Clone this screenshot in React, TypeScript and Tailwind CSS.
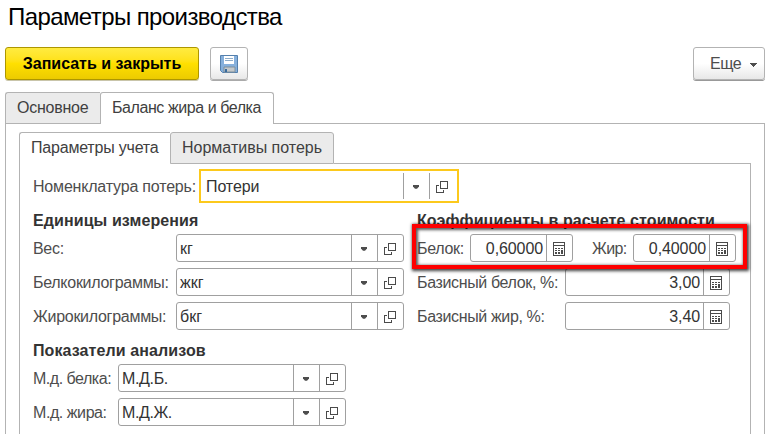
import type { ReactNode } from "react";

function Caret() {
  return (
    <svg width="7" height="4" viewBox="0 0 7 4" shapeRendering="crispEdges" className="shrink-0">
      <path d="M0 0h7v1h-1v1h-1v1h-1v1h-1v-1h-1v-1h-1v-1h-1z" fill="#4d4d4d" />
    </svg>
  );
}

function SmallCaret() {
  return (
    <svg width="6" height="4" viewBox="0 0 6 4" className="shrink-0">
      <path d="M0 0h6v1.500L4 3.700H2L0 1.500z" fill="#4d4d4d" />
    </svg>
  );
}

function OpenIcon() {
  return (
    <svg width="12" height="12" viewBox="0 0 12 12" shapeRendering="crispEdges" fill="none" stroke="#4a4a4a">
      <path d="M4.5 .5h7v7h-7zM3 4.5h-2.5v7h7v-2.500" />
    </svg>
  );
}

function CalcIcon() {
  return (
    <svg width="12" height="14" viewBox="0 0 12 14" shapeRendering="crispEdges">
      <rect x=".5" y=".5" width="11" height="13" fill="#fff" stroke="#4a4a4a" />
      <path
        d="M1 3h10v1H1zM2 6h2v1H2zM5 6h2v1H5zM8 6h2v1H8zM2 8h2v1H2zM5 8h2v1H5zM8 8h2v4H8zM2 10h2v2H2zM5 10h2v2H5z"
        fill="#4a4a4a"
      />
    </svg>
  );
}

function FloppyIcon() {
  return (
    <svg width="18" height="18" viewBox="0 0 18 18">
      <path d="M.5.5h17v17h-15l-2-2z" fill="#86b0dc" stroke="#5480ad" />
      <path d="M4 1h10v8H4z" fill="#fff" />
      <path d="M5 3.5h8M5 5.5h8" stroke="#8fadc9" />
      <path d="M4 12h11v5H4z" fill="#c4c8ca" stroke="#7f909d" />
      <path d="M5 14h2v3H5z" fill="#386b9d" />
    </svg>
  );
}

function SelectField({ value, className }: { value: string; className: string }) {
  return (
    <div className={"flex h-7 shrink-0 rounded-[3px] border border-[#a0a0a0] bg-white text-[#333] " + className}>
      <span className="flex-1 pl-[3px] leading-[27px]">{value}</span>
      <span className="flex w-[26px] items-center border-l border-[#a0a0a0] pl-[9px] pt-0.5">
        <SmallCaret />
      </span>
      <span className="flex w-[26px] items-center border-l border-[#a0a0a0] pl-1.5 pt-0.5">
        <OpenIcon />
      </span>
    </div>
  );
}

function NumberField({ value, className }: { value: string; className: string }) {
  return (
    <div className={"flex h-7 shrink-0 rounded-[3px] border border-[#a0a0a0] bg-white text-[#333] " + className}>
      <span className="flex-1 pr-[3px] text-right leading-[27px] tracking-[-0.1px]">{value}</span>
      <span className="flex w-[26px] items-center border-l border-[#a0a0a0] pl-1.5 pt-0.5">
        <CalcIcon />
      </span>
    </div>
  );
}

function Label({ children, className = "" }: { children: ReactNode; className?: string }) {
  return <span className={"h-7 shrink-0 leading-[29px] " + className}>{children}</span>;
}

export default function App() {
  return (
    <div className="h-[434px] w-[778px] overflow-hidden whitespace-nowrap bg-white font-['Liberation_Sans',Arial,sans-serif] text-base text-[#4d4d4d]">
      <h1 className="h-[47px] pl-2 pt-[2px] text-2xl leading-[30px] text-black">
        <span className="tracking-[-0.59px]">Параметры производства</span>
      </h1>
      <div className="flex h-[45px] pl-[5px]">
        <button className="h-[33px] w-[194px] rounded-[3px] border border-[#ad9600] bg-linear-to-b from-[#ffeb3f] via-[#ffe000] to-[#eccb00] font-bold text-black shadow-[0_1px_0_#c9c5aa]">
          Записать и закрыть
        </button>
        <button className="ml-[11px] flex h-[33px] w-[38px] items-center justify-center rounded-[3px] border border-[#b3b3b3] bg-linear-to-b from-white from-50% to-[#e8e8e8] pt-px shadow-[0_1px_0_#aaa]">
          <FloppyIcon />
        </button>
        <button className="ml-[445px] flex h-[33px] w-[72px] items-center rounded-[3px] border border-[#b3b3b3] bg-linear-to-b from-white from-50% to-[#e8e8e8] pl-4 shadow-[0_1px_0_#999]">
          <span className="w-10 text-left tracking-[-0.4px]">Еще</span>
          <span className="flex pt-[3px]">
            <Caret />
          </span>
        </button>
      </div>

      <div className="flex h-8 pl-[5px] leading-[29px] text-[#404040]">
        <div className="w-[95px] rounded-tl-[3px] border border-r-0 border-[#b3b3b3] bg-[#ebebeb] pl-[11px] tracking-[-0.25px]">
          Основное
        </div>
        <div className="w-[174px] rounded-t-[3px] border border-b-0 border-[#b3b3b3] pl-[11px] tracking-[-0.43px]">
          Баланс жира и белка
        </div>
        <div className="w-[491px] border-b border-[#b3b3b3]" />
      </div>

      <div className="ml-[5px] h-[310px] w-[760px] border-x border-[#b3b3b3] pl-[13px] pt-2">
        <div className="flex h-8 leading-[29px] text-[#404040]">
          <div className="w-[151px] rounded-tl-[3px] border border-b-0 border-r-0 border-[#b3b3b3] pl-[11px] tracking-[-0.2px]">
            Параметры учета
          </div>
          <div className="w-[164px] rounded-t-[3px] border border-[#b3b3b3] bg-[#ebebeb] pl-[11px]">
            Нормативы потерь
          </div>
          <div className="w-[417px] border-b border-[#b3b3b3]" />
        </div>
        <div className="h-[270px] w-[732px] border-x border-[#b3b3b3] pl-[13px] pt-[5px]">
          <div className="flex h-[34px] items-center">
            <Label className="w-[166px] tracking-[-0.19px]">Номенклатура потерь:</Label>
            <div className="flex h-[34px] w-[260px] items-center border-2 border-[#fcc91c] text-[#333]">
              <span className="flex-1 pl-[5px] pt-px tracking-[-0.1px]">Потери</span>
              <span className="flex h-[26px] w-[26px] items-center border-l border-[#a0a0a0] pl-[9px] pt-0.5">
                <SmallCaret />
              </span>
              <span className="flex h-[26px] w-[28px] items-center border-l border-[#a0a0a0] pl-1.5 pt-0.5">
                <OpenIcon />
              </span>
            </div>
          </div>

          <div className="flex pt-[7px]">
            <div className="w-[384px]">
              <h2 className="h-6 font-bold leading-[22px] tracking-[0.1px] text-[#333]">Единицы измерения</h2>
              <div className="flex flex-col gap-1.5">
                <div className="flex">
                  <Label className="w-[143px] tracking-[-0.3px]">Вес:</Label>
                  <SelectField value="кг" className="w-[228px]" />
                </div>
                <div className="flex">
                  <Label className="w-[143px] tracking-[-0.28px]">Белкокилограммы:</Label>
                  <SelectField value="жкг" className="w-[228px]" />
                </div>
                <div className="flex">
                  <Label className="w-[143px] tracking-[-0.28px]">Жирокилограммы:</Label>
                  <SelectField value="бкг" className="w-[228px]" />
                </div>
              </div>
              <h2 className="mt-2.5 h-6 font-bold leading-[22px] tracking-[0.1px] text-[#333]">Показатели анализов</h2>
              <div className="flex flex-col gap-1.5">
                <div className="flex">
                  <Label className="w-[85px] tracking-[-0.48px]">М.д. белка:</Label>
                  <SelectField value="М.Д.Б." className="w-[228px] tracking-[-0.35px]" />
                </div>
                <div className="flex">
                  <Label className="w-[85px] tracking-[-0.43px]">М.д. жира:</Label>
                  <SelectField value="М.Д.Ж." className="w-[228px] tracking-[-0.4px]" />
                </div>
              </div>
            </div>

            <div className="relative h-[120px] w-[330px]">
              <h2 className="h-6 font-bold leading-[22px] tracking-[0.1px] text-[#333]">Коэффициенты в расчете стоимости</h2>
              <div className="flex flex-col gap-1.5">
                <div className="flex">
                  <Label className="w-[53px] tracking-[-0.3px]">Белок:</Label>
                  <NumberField value="0,60000" className="w-[103px]" />
                  <Label className="ml-[19px] w-[41px] tracking-[-0.6px]">Жир:</Label>
                  <NumberField value="0,40000" className="w-[103px]" />
                </div>
                <div className="flex">
                  <Label className="w-[148px] tracking-[-0.36px]">Базисный белок, %:</Label>
                  <NumberField value="3,00" className="w-[165px]" />
                </div>
                <div className="flex">
                  <Label className="w-[148px] tracking-[-0.36px]">Базисный жир, %:</Label>
                  <NumberField value="3,40" className="w-[165px]" />
                </div>
              </div>
              <div className="absolute -left-[5px] top-[14px] h-[45px] w-[335px] border-4 border-[#fe0000] shadow-[1px_1px_3px_1px_rgba(0,0,0,0.75),inset_1px_1px_3px_1px_rgba(0,0,0,0.65)]" />
            </div>
          </div>
        </div>
      </div>
    </div>
  );
}
